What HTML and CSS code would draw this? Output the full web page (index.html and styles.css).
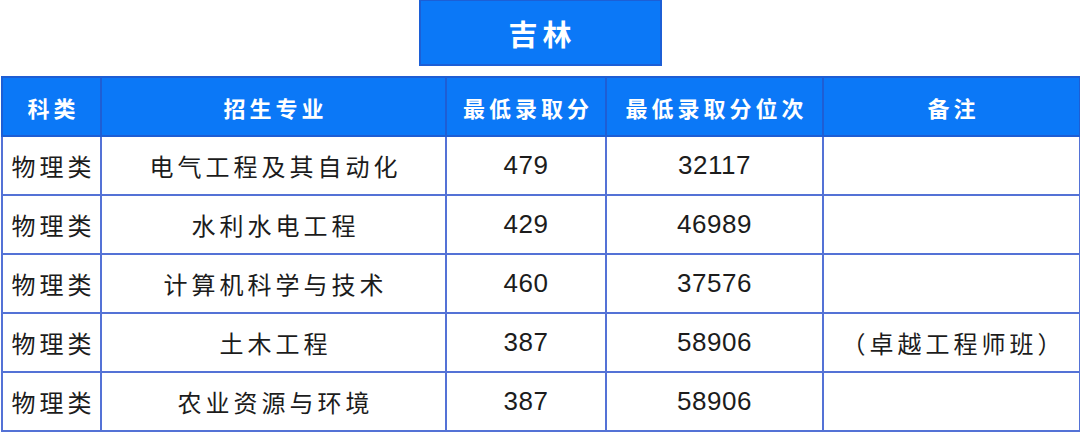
FILE: index.html
```html
<!DOCTYPE html>
<html lang="zh">
<head>
<meta charset="utf-8">
<link rel="stylesheet" href="styles.css">
</head>
<body>
<div class="page">
  <div class="title">吉林</div>
  <table class="scores">
    <colgroup>
      <col class="c1"><col class="c2"><col class="c3"><col class="c4"><col class="c5">
    </colgroup>
    <thead>
      <tr><th>科类</th><th>招生专业</th><th>最低录取分</th><th>最低录取分位次</th><th>备注</th></tr>
    </thead>
    <tbody>
      <tr><td class="cjk">物理类</td><td class="cjk">电气工程及其自动化</td><td class="num">479</td><td class="num">32117</td><td class="cjk"></td></tr>
      <tr><td class="cjk">物理类</td><td class="cjk">水利水电工程</td><td class="num">429</td><td class="num">46989</td><td class="cjk"></td></tr>
      <tr><td class="cjk">物理类</td><td class="cjk">计算机科学与技术</td><td class="num">460</td><td class="num">37576</td><td class="cjk"></td></tr>
      <tr><td class="cjk">物理类</td><td class="cjk">土木工程</td><td class="num">387</td><td class="num">58906</td><td class="cjk">（卓越工程师班）</td></tr>
      <tr><td class="cjk">物理类</td><td class="cjk">农业资源与环境</td><td class="num">387</td><td class="num">58906</td><td class="cjk"></td></tr>
    </tbody>
  </table>
</div>
</body>
</html>
```

FILE: styles.css
```css
html, body {
  margin: 0;
  padding: 0;
  background: #ffffff;
}
.page {
  width: 1080px;
  height: 432px;
  overflow: hidden;
  display: flex;
  flex-direction: column;
  align-items: center;
  font-family: "Noto Sans CJK SC", "Noto Sans", sans-serif;
}
.title {
  box-sizing: border-box;
  width: 243px;
  height: 67px;
  background: #0b78f7;
  border: 2px solid #1c5fd6;
  border-top-width: 1px;
  color: #ffffff;
  font-size: 29px;
  font-weight: 700;
  letter-spacing: 5px;
  text-indent: 5px;
  display: flex;
  align-items: center;
  justify-content: center;
}
.scores {
  margin-top: 10px;
  align-self: flex-start;
  margin-left: 1px;
  width: 1078px;
  border-collapse: collapse;
  table-layout: fixed;
}
.c1 { width: 99px; }
.c2 { width: 345px; }
.c3 { width: 160px; }
.c4 { width: 217px; }
.c5 { width: 257px; }
.scores th {
  height: 57px;
  padding: 0;
  background: #0b78f7;
  color: #ffffff;
  font-size: 22px;
  font-weight: 700;
  letter-spacing: 4px;
  text-indent: 4px;
  border: 2px solid #1e5ed4;
  text-align: center;
}
.scores td {
  height: 57px;
  padding: 0;
  border: 2px solid #5472d6;
  text-align: center;
  color: #1c1c1c;
}
.scores td.cjk {
  font-size: 24px;
  letter-spacing: 4px;
  text-indent: 4px;
}
.scores td.num {
  font-family: "Liberation Sans", Arial, sans-serif;
  font-size: 26px;
  letter-spacing: 0.5px;
}
```
